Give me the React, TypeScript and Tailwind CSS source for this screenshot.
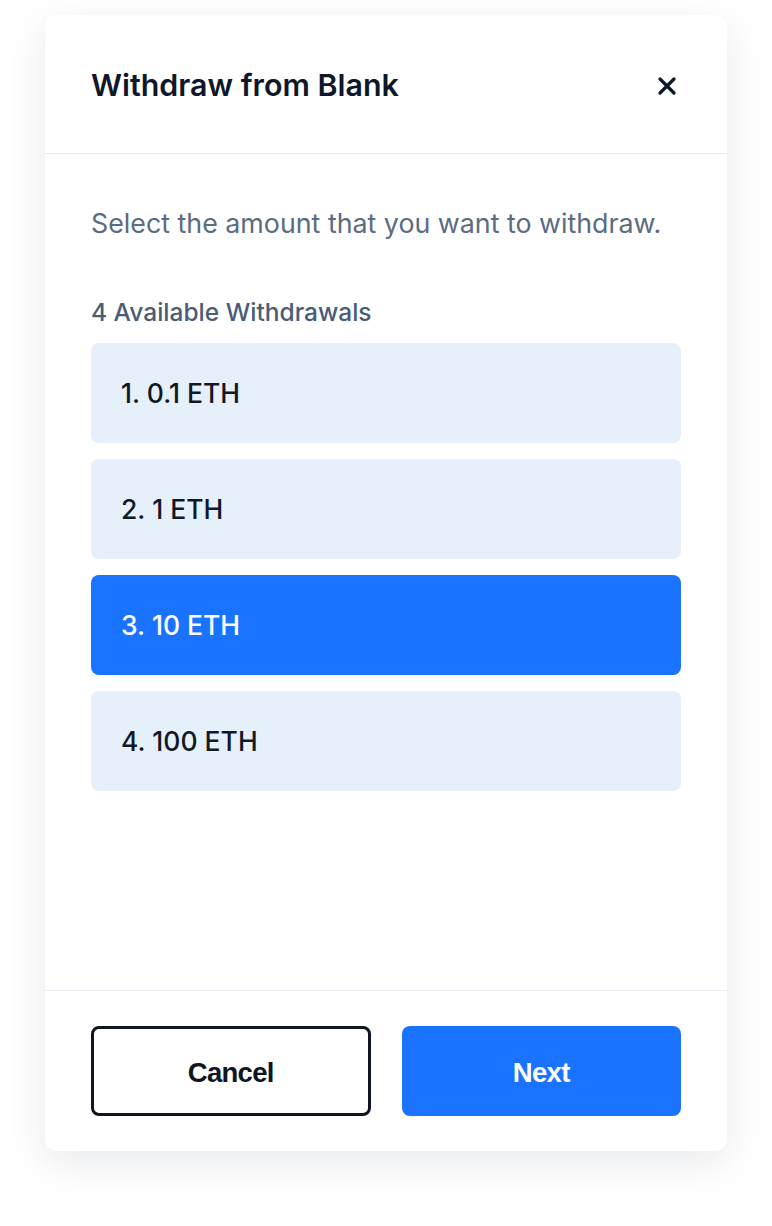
import { useState } from "react";

const OPTIONS = ["0.1 ETH", "1 ETH", "10 ETH", "100 ETH"];

export default function App() {
  const [selected, setSelected] = useState(2);

  return (
    <div className="min-h-[1226px] bg-white pt-[15px] font-['Inter',sans-serif]">
      <div className="mx-auto flex w-[682px] flex-col rounded-xl bg-white shadow-[0_12px_40px_rgba(15,23,42,0.09)]">
        <div className="flex h-[139px] items-center justify-between border-b border-[#e8ecf2] px-[46px] pt-[3px]">
          <h1 className="text-[30.4px] font-semibold text-[#0f172a]">
            Withdraw from Blank
          </h1>
          <button className="mr-[4px] text-[#0f172a]">
            <svg width="20" height="20" viewBox="0 0 20 20" fill="none">
              <path
                d="M3 3L17 17M17 3L3 17"
                stroke="currentColor"
                strokeWidth="3.2"
                strokeLinecap="round"
              />
            </svg>
          </button>
        </div>

        <div className="flex h-[836px] flex-col px-[46px] pt-[52px]">
          <p className="text-[26.8px] leading-[34px] text-[#5b6b82]">
            Select the amount that you want to withdraw.
          </p>
          <p className="mt-[56px] mb-[15px] text-[24.5px] leading-[32px] font-medium text-[#4a5c78]">
            4 Available Withdrawals
          </p>
          <div className="flex flex-col gap-[16px]">
            {OPTIONS.map((amount, i) => (
              <button
                key={amount}
                onClick={() => setSelected(i)}
                className={
                  i === selected
                    ? "flex h-[100px] items-center rounded-lg bg-[#1a73ff] px-[30px] pt-[2px] text-left text-[26.5px] font-medium text-white"
                    : "flex h-[100px] items-center rounded-lg bg-[#e6f0fa] px-[30px] pt-[2px] text-left text-[26.5px] font-medium text-[#111827]"
                }
              >
                {i + 1}. {amount}
              </button>
            ))}
          </div>
        </div>

        <div className="grid grid-cols-2 gap-[31px] border-t border-[#e8eef6] px-[46px] pt-[35px] pb-[35px]">
          <button className="flex h-[90px] items-center justify-center rounded-lg border-[3px] border-[#0f1523] bg-white pt-[4px] font-['Liberation_Sans',sans-serif] text-[27.5px] font-bold tracking-[-0.7px] text-[#0f1523]">
            Cancel
          </button>
          <button className="flex h-[90px] items-center justify-center rounded-lg bg-[#1a73ff] pt-[4px] font-['Liberation_Sans',sans-serif] text-[27.5px] font-bold tracking-[-0.7px] text-white">
            Next
          </button>
        </div>
      </div>
    </div>
  );
}
